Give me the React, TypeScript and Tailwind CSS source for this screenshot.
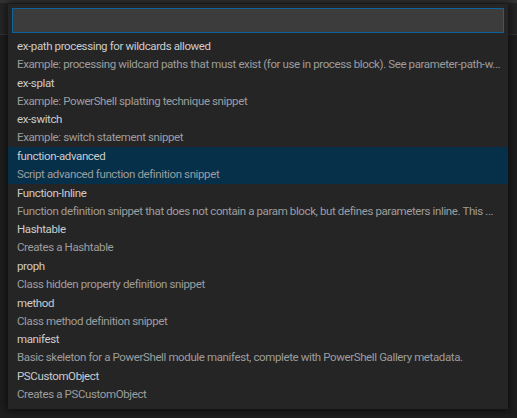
import React from "react";

const items = [
  { label: "ex-path processing for wildcards allowed", desc: "Example: processing wildcard paths that must exist (for use in process block). See parameter-path-w..." },
  { label: "ex-splat", desc: "Example: PowerShell splatting technique snippet" },
  { label: "ex-switch", desc: "Example: switch statement snippet" },
  { label: "function-advanced", desc: "Script advanced function definition snippet", active: true },
  { label: "Function-Inline", desc: "Function definition snippet that does not contain a param block, but defines parameters inline. This ..." },
  { label: "Hashtable", desc: "Creates a Hashtable" },
  { label: "proph", desc: "Class hidden property definition snippet" },
  { label: "method", desc: "Class method definition snippet" },
  { label: "manifest", desc: "Basic skeleton for a PowerShell module manifest, complete with PowerShell Gallery metadata." },
  { label: "PSCustomObject", desc: "Creates a PSCustomObject" },
];

export default function App() {
  return (
    <div
      className="relative w-[517px] h-[418px] overflow-hidden bg-[#1e1e1e]"
      style={{ fontFamily: 'Roboto, "Liberation Sans", sans-serif' }}
    >
      <div className="h-[3px] bg-[#333333]" />
      <div className="h-[32px] bg-[#252526] border-b border-[#333333]" />

      <div className="absolute left-[8px] top-[4px] w-[500px] h-[405px] bg-[#252526] shadow-[0_0_8px_2px_rgba(0,0,0,0.55)] flex flex-col p-[4px]">
        <div className="h-[25px] bg-[#3c3c3c] border border-[#0e639c]" />
        <div className="mt-[4px] flex flex-col -mx-[4px]">
          {items.map((it) => (
            <div
              key={it.label}
              className={`h-[36.67px] pl-[9px] pr-[2px] flex flex-col justify-start ${it.active ? "bg-[#062f4a]" : ""}`}
            >
              <div className="h-[18px] leading-[19px] text-[11.5px] tracking-[-0.38px] text-[#cccccc] whitespace-nowrap overflow-hidden">{it.label}</div>
              <div className="h-[18px] leading-[18px] text-[11.5px] tracking-[-0.38px] text-[#9d9d9d] whitespace-nowrap overflow-hidden">{it.desc}</div>
            </div>
          ))}
        </div>
      </div>
    </div>
  );
}
